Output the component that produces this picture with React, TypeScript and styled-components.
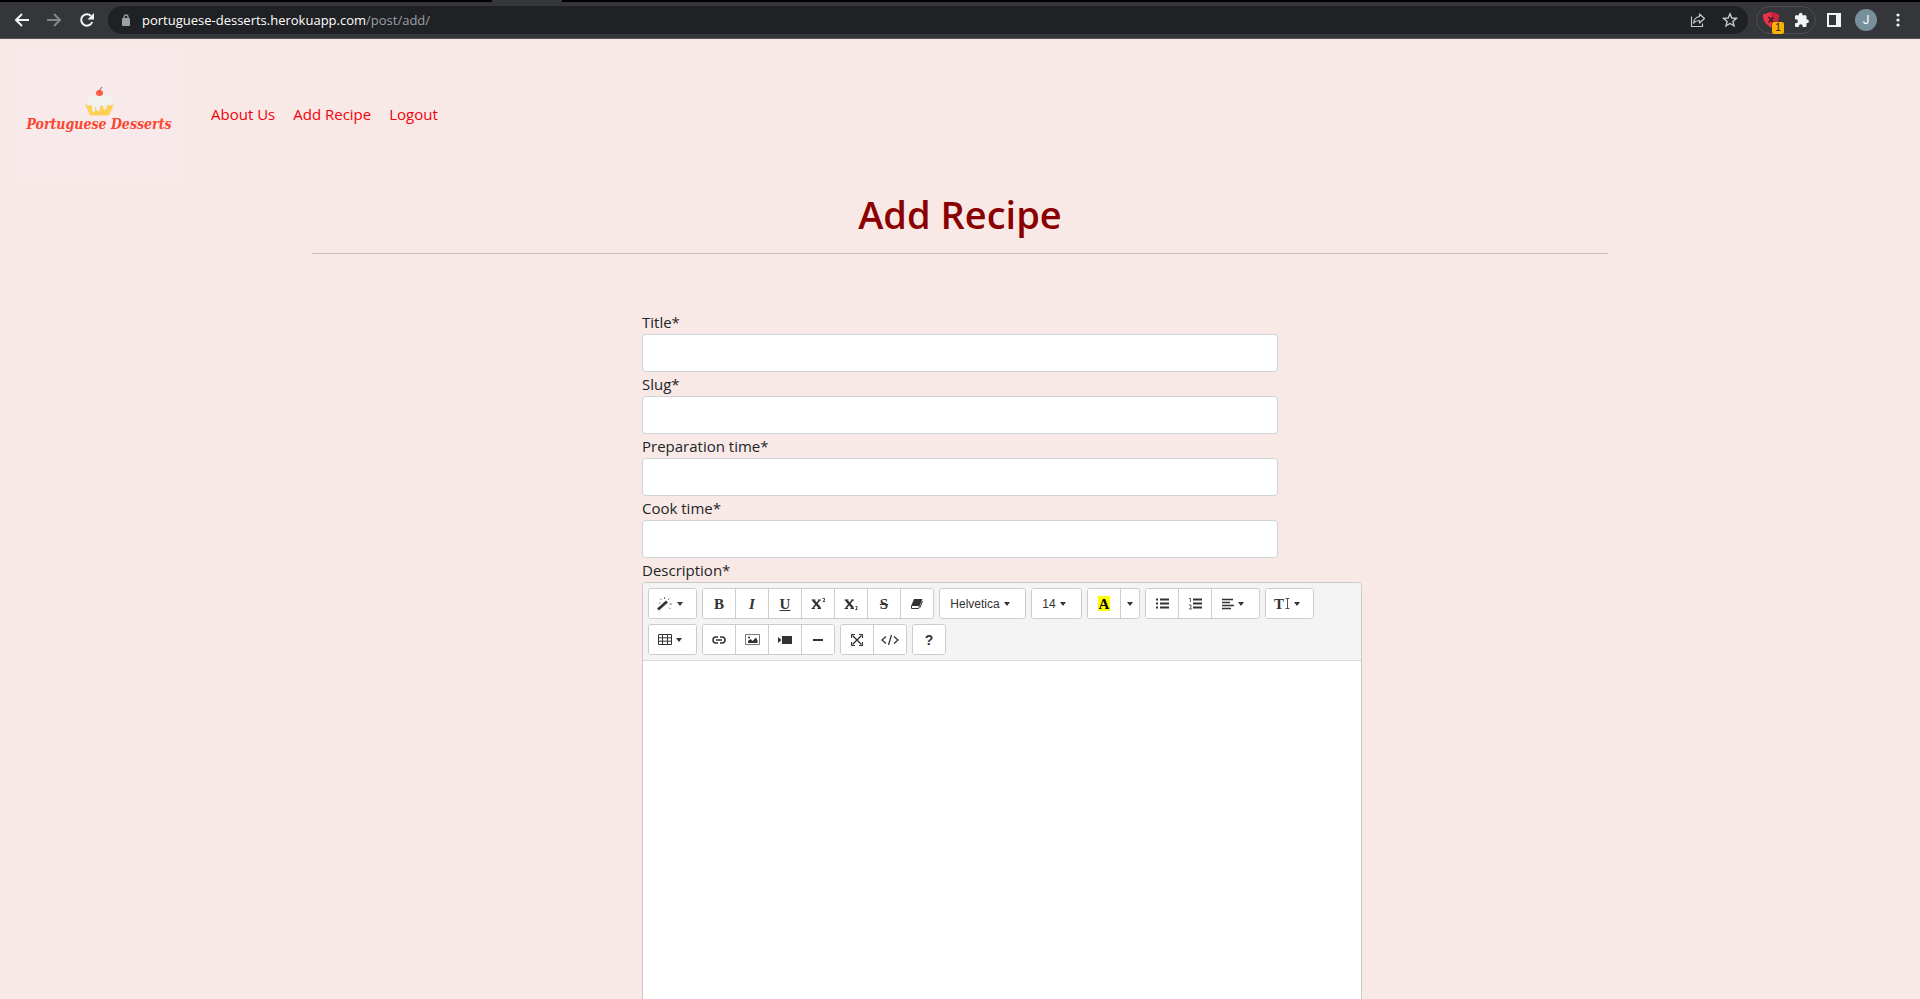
import React from 'react';
import styled, { createGlobalStyle } from 'styled-components';

const GlobalStyle = createGlobalStyle`
  *, *::before, *::after { box-sizing: border-box; }
  html, body, #root { height: 100%; }
  body {
    margin: 0;
    background: #f9e9e6;
    color: #212529;
    font-family: "Open Sans", "Noto Sans", sans-serif;
    font-size: 15px;
    line-height: 24px;
  }
  button, input { font: inherit; color: inherit; }
`;

const Screen = styled.div`
  display: flex;
  flex-direction: column;
  height: 100%;
`;

/* ---------- Browser bar ---------- */

const TabStrip = styled.div`
  display: flex;
  flex: none;
  height: 2px;
  padding-left: 492px;
  background: #000;
`;

const ActiveTab = styled.div`
  width: 70px;
  background: #35363a;
`;

const BrowserBar = styled.header`
  display: flex;
  align-items: center;
  flex: none;
  height: 37px;
  padding: 0 6px 0 11px;
  background: #35363a;
  border-bottom: 1px solid #55565a;
`;

const BarButton = styled.button<{ $w?: number; $dim?: boolean }>`
  display: flex;
  align-items: center;
  justify-content: center;
  flex: none;
  width: ${p => p.$w ?? 32}px;
  height: 28px;
  padding: 0;
  border: 0;
  background: none;
  color: ${p => (p.$dim ? '#85868a' : '#f1f3f4')};
`;

const AddressBar = styled.div`
  display: flex;
  align-items: center;
  flex: 1;
  height: 28px;
  margin: 0 8px 0 10px;
  padding: 0 2px 0 14px;
  border-radius: 14px;
  background: #202124;
  color: #9aa0a6;
  font-size: 13px;
  line-height: 20px;
`;

const Address = styled.span`
  flex: 1;
  margin-left: 12px;
`;

const Host = styled.span`
  color: #fff;
`;

const AddressAction = styled(BarButton)`
  color: #c4c7cb;
`;

const Extensions = styled.div`
  display: flex;
  align-items: center;
  justify-content: space-between;
  width: 60px;
  height: 28px;
  margin-right: 2px;
  padding: 0 2px 0 0;
  border: 1px solid #4c4d51;
  border-radius: 14px;
`;

const ShieldButton = styled(BarButton)`
  position: relative;
`;

const Badge = styled.span`
  position: absolute;
  right: 1px;
  bottom: 0;
  width: 12px;
  height: 12px;
  border-radius: 2px;
  background: #fbb000;
  color: #202124;
  font: 10px/12px "Liberation Sans", sans-serif;
  text-align: center;
`;

const Avatar = styled.span`
  width: 22px;
  height: 22px;
  border-radius: 50%;
  background: #78909c;
  color: #fff;
  font: 12px/22px Roboto, sans-serif;
  text-align: center;
`;

/* ---------- Page ---------- */

const Page = styled.div`
  flex: 1;
  min-height: 0;
  overflow-y: auto;
  scrollbar-width: none;
`;

const Navbar = styled.nav`
  display: flex;
  align-items: center;
  padding: 10px 17px;
`;

const Brand = styled.a`
  display: block;
  width: 165px;
  height: 130px;
  margin-right: 29px;
  background: #f8e9ea;
`;

const NavLink = styled.a`
  margin-right: 18px;
  color: #f0000c;
  text-decoration: none;
`;

const Container = styled.main`
  max-width: 1320px;
  margin: 0 auto;
  padding: 0 12px;
`;

const Heading = styled.h1`
  margin: 0;
  padding-bottom: 14px;
  border-bottom: 1px solid #c7b9bc;
  color: #8b0000;
  font-size: 38px;
  font-weight: 600;
  line-height: 50px;
  text-align: center;
`;

const Form = styled.form`
  width: 50%;
  margin: 56px auto 0;
  padding: 0 6px;
`;

const Label = styled.label`
  display: block;
`;

const TextInput = styled.input`
  display: block;
  width: 100%;
  height: 38px;
  padding: 6px 12px;
  border: 1px solid #ced4da;
  border-radius: 4px;
  background: #fff;
`;

/* ---------- Editor ---------- */

const Editor = styled.div`
  width: 720px;
  border: 1px solid #cacaca;
  border-radius: 4px;
  background: #fff;
  overflow: hidden;
`;

const Toolbar = styled.div`
  display: flex;
  flex-wrap: wrap;
  gap: 5px;
  padding: 5px;
  border-bottom: 1px solid #d8d8d8;
  background: #f4f4f4;
`;

const Group = styled.div`
  display: flex;
  overflow: hidden;
  border: 1px solid #ccc;
  border-radius: 3px;
  background: #fff;
`;

const Tool = styled.button<{ $w?: number; $menu?: boolean }>`
  display: flex;
  align-items: center;
  justify-content: center;
  gap: 4px;
  box-sizing: content-box;
  width: ${p => (p.$w ?? 32) - (p.$menu ? 5 : 0)}px;
  height: 29px;
  padding: 0 ${p => (p.$menu ? 5 : 0)}px 0 0;
  border: 0;
  background: #fff;
  color: #333;
  font: 12px/20px "Liberation Sans", sans-serif;

  &:not(:first-child) {
    border-left: 1px solid #ccc;
  }
`;

const Glyph = styled.span<{ $italic?: boolean; $line?: string }>`
  font: ${p => (p.$italic ? 'italic ' : '')}bold 15px/16px "Liberation Serif", serif;
  text-decoration: ${p => p.$line ?? 'none'};
`;

const GlyphPair = styled.span`
  display: flex;
  align-items: center;
  gap: 1px;
`;

const Marker = styled.span`
  width: 12px;
  height: 15px;
  background: #ff0;
  color: #000;
  font: bold 15px/16px "Liberation Serif", serif;
  text-align: center;
`;

const Help = styled.span`
  font: bold 14px/16px "Liberation Sans", sans-serif;
`;

const Caret = styled.span`
  border: 3px solid transparent;
  border-top: 4px solid #333;
  border-bottom: 0;
`;

const EditArea = styled.div`
  height: 400px;
  outline: 0;
`;

/* ---------- Icons ---------- */

const Icon = ({ children, w = 16, h = 16 }: { children: React.ReactNode; w?: number; h?: number }) => (
  <svg width={w} height={h} viewBox={`0 0 ${w} ${h}`} fill="none" stroke="currentColor" aria-hidden="true">
    {children}
  </svg>
);

const BackIcon = () => <Icon><path d="M15 8H2M8 2L2 8l6 6" strokeWidth="2" /></Icon>;
const ForwardIcon = () => <Icon><path d="M1 8h13M8 2l6 6-6 6" strokeWidth="2" /></Icon>;
const ReloadIcon = () => (
  <Icon>
    <path d="M13.2 10A5.7 5.7 0 1 1 12 4" strokeWidth="2" />
    <path d="M15 1v6.5H8.5z" fill="currentColor" stroke="none" />
  </Icon>
);
const LockIcon = () => (
  <Icon w={8} h={12}>
    <rect y="4" width="8" height="8" rx="1" fill="currentColor" stroke="none" />
    <path d="M2 5V3a2 2 0 0 1 4 0v2" strokeWidth="1.3" />
  </Icon>
);
const ShareIcon = () => (
  <Icon>
    <path d="M1.500 4.500v10h11v-3" strokeWidth="1.200" />
    <path d="M9.500 2l5 4.500-5 4.500V8.500c-3 0-4.500.8-6 2.500.5-3.500 2.500-6 6-6.500z" strokeWidth="1.200" strokeLinejoin="round" />
  </Icon>
);
const StarIcon = () => (
  <Icon><path d="M8 1.800l1.800 4.200 4.600.4-3.500 3 1.100 4.500L8 11.500l-4 2.400 1.100-4.500-3.500-3 4.600-.4z" strokeWidth="1.400" /></Icon>
);
const ShieldIcon = () => (
  <Icon w={18} h={18}>
    <path d="M9 1l8 2.500c.3 6-2.500 10-8 13-5.500-3-8.300-7-8-13z" fill="#ea3347" stroke="none" />
    <path d="M9 1l8 2.500c.3 6-2.500 10-8 13z" fill="#c9253a" stroke="none" />
    <path d="M6.500 6l5 5.500M11.500 6l-5 5.500" stroke="#33242a" strokeWidth="1.600" />
  </Icon>
);
const PuzzleIcon = () => (
  <Icon>
    <path d="M13.500 7.500h-1V4.600c0-.8-.6-1.300-1.300-1.300H8.500V2.500a1.800 1.800 0 0 0-3.600 0v.8H2.200C1.500 3.300 1 3.900 1 4.600v2.600h.9a2 2 0 0 1 0 4H1v2.500c0 .8.500 1.300 1.200 1.300h2.600v-.9a1.900 1.900 0 0 1 3.900 0v.9h2.500c.7 0 1.300-.5 1.300-1.300V11h1a1.800 1.800 0 0 0 0-3.500z" fill="currentColor" stroke="none" />
  </Icon>
);
const PanelIcon = () => (
  <Icon w={14} h={14}>
    <path d="M0 0h14v14H0zM2 2v10h7V2z" fill="currentColor" fillRule="evenodd" stroke="none" />
  </Icon>
);
const MenuIcon = () => (
  <Icon w={4} h={14}>
    <g fill="currentColor" stroke="none"><circle cx="2" cy="2" r="1.600" /><circle cx="2" cy="7" r="1.600" /><circle cx="2" cy="12" r="1.600" /></g>
  </Icon>
);

const MagicIcon = () => (
  <Icon>
    <path d="M1 13.500L10 5.500" strokeWidth="2.800" />
    <path d="M7.500 1v2M3 2.500L4.500 4M12.500 2.500L11 4M12.500 8H15M12 11.500l1.500 1.500M2 7h1.500" stroke="#777" />
  </Icon>
);
const TableIcon = () => (
  <Icon w={14} h={12}>
    <path d="M.5.5h13v10H.5zM.5 3.800h13M.5 7.200h13M4.500.5v10M9.500.5v10" />
  </Icon>
);
const EraserIcon = () => (
  <Icon w={12} h={12}>
    <path d="M3 1h8.500L9 7H.5z" fill="currentColor" stroke="none" />
    <path d="M.5 7.500h8l-.8 3H.5zM9 9.500L11.500 3" />
  </Icon>
);
const Bullets = () => <path d="M4 2.500h9M4 6.500h9M4 10.500h9" strokeWidth="2" />;
const ListIcon = () => (
  <Icon w={13} h={13}><Bullets /><path d="M0 2.500h2M0 6.500h2M0 10.500h2" strokeWidth="2" /></Icon>
);
const OrderedIcon = () => (
  <Icon w={13} h={13}>
    <Bullets />
    <path d="M0 1.500h1.500V5M0 8h2v2l-1.500 2H3" strokeWidth=".8" />
  </Icon>
);
const AlignIcon = () => (
  <Icon w={12} h={12}><path d="M0 1.500h11M0 4.500h8M0 7.500h12M0 10.500h9" strokeWidth="1.400" /></Icon>
);
const HeightIcon = () => (
  <Icon w={5} h={12}><path d="M.5.5h4M2.500.5v10M.5 10.500h4" stroke="#555" /></Icon>
);
const LinkIcon = () => (
  <Icon w={14} h={10}>
    <path d="M6 2H4a3 3 0 0 0 0 6h2M8 2h2a3 3 0 0 1 0 6H8M4 5h6" strokeWidth="1.500" />
  </Icon>
);
const PictureIcon = () => (
  <Icon w={15} h={12}>
    <path d="M.5.5h14v10H.5z" stroke="#777" />
    <path d="M3 9V7l2.500-2L7.500 7 11 3.500l1.500 3V9z" fill="currentColor" stroke="none" />
    <circle cx="4" cy="3.500" r="1" fill="currentColor" stroke="none" />
  </Icon>
);
const VideoIcon = () => (
  <Icon w={14} h={10}>
    <path d="M4 1h10v8H4zM0 2l3.500 3L0 8z" fill="currentColor" stroke="none" />
  </Icon>
);
const RuleIcon = () => <Icon w={10} h={4}><path d="M0 2h10" strokeWidth="2" /></Icon>;
const ExpandIcon = () => (
  <Icon w={12} h={12}>
    <path d="M1.500 1.500l9 9M10.500 1.500l-9 9" strokeWidth="1.400" />
    <path d="M.5 4V.5H4M8 .5h3.500V4M11.500 8v3.500H8M4 11.500H.5V8" />
  </Icon>
);
const CodeIcon = () => (
  <Icon w={18} h={10}><path d="M5 1.500L1 5l4 3.500M13 1.500L17 5l-4 3.500M10.500 0l-3 10" strokeWidth="1.300" /></Icon>
);
const ScriptIcon = ({ raised }: { raised?: boolean }) => (
  <Icon w={15} h={14}>
    <path d="M2 3l7 8" strokeWidth="2.400" />
    <path d="M8.500 3L2 11" strokeWidth="1.500" />
    <path d="M.5 3h4M7 3h3M.5 11.500H4M6.500 11.500H10" />
    <path d={raised ? 'M11.500 1.500h2v1.500l-1.500 1.500h2' : 'M11.500 9.500h1.500v1.500l-1.500 1.500h2'} strokeWidth=".9" />
  </Icon>
);

const Logo = () => (
  <svg width="165" height="130" viewBox="0 0 165 130" role="img" aria-label="Portuguese Desserts">
    <path d="M68 55h29l-5 11.500H73z" fill="#ffcf56" />
    <path d="M69 55c-1-6 5-10 14-10s15 4 14 10c-2 2-5 1-7 1 0 6-4 6-4 1-2-1-3 0-3 2 0 5-4 4-4-1h-1v3c0 3-3 3-3-1v-4c-2 1-5 1-6-1z" fill="#f1f1f0" />
    <ellipse cx="82.500" cy="44" rx="3.500" ry="3" fill="#fc5b45" />
    <path d="M82 42l3-4" stroke="#665" fill="none" />
    <text x="82" y="80" textAnchor="middle" fill="#fa4630" fontFamily="DejaVu Serif Condensed, DejaVu Serif, serif" fontSize="14" fontWeight="700" fontStyle="italic">
      Portuguese Desserts
    </text>
  </svg>
);

const fields = [
  { id: 'title', label: 'Title*' },
  { id: 'slug', label: 'Slug*' },
  { id: 'prep', label: 'Preparation time*' },
  { id: 'cook', label: 'Cook time*' },
];

export default function App() {
  return (
    <Screen>
      <GlobalStyle />
      <TabStrip><ActiveTab /></TabStrip>
      <BrowserBar>
        <BarButton aria-label="Back" $w={22}><BackIcon /></BarButton>
        <BarButton aria-label="Forward" $w={42} $dim><ForwardIcon /></BarButton>
        <BarButton aria-label="Reload" $w={23}><ReloadIcon /></BarButton>
        <AddressBar>
          <LockIcon />
          <Address><Host>portuguese-desserts.herokuapp.com</Host>/post/add/</Address>
          <AddressAction aria-label="Share"><ShareIcon /></AddressAction>
          <AddressAction aria-label="Bookmark"><StarIcon /></AddressAction>
        </AddressBar>
        <Extensions>
          <ShieldButton aria-label="Blocker" $w={28}><ShieldIcon /><Badge>1</Badge></ShieldButton>
          <BarButton aria-label="Extensions" $w={22}><PuzzleIcon /></BarButton>
        </Extensions>
        <BarButton aria-label="Side panel"><PanelIcon /></BarButton>
        <BarButton aria-label="Profile"><Avatar>J</Avatar></BarButton>
        <BarButton aria-label="Menu"><MenuIcon /></BarButton>
      </BrowserBar>
      <Page>
        <Navbar>
          <Brand href="#"><Logo /></Brand>
          <NavLink href="#about">About Us</NavLink>
          <NavLink href="#add">Add Recipe</NavLink>
          <NavLink href="#logout">Logout</NavLink>
        </Navbar>
        <Container>
          <Heading>Add Recipe</Heading>
          <Form>
            {fields.map(f => (
              <div key={f.id}>
                <Label htmlFor={f.id}>{f.label}</Label>
                <TextInput id={f.id} type="text" />
              </div>
            ))}
            <Label id="description-label">Description*</Label>
            <Editor>
              <Toolbar>
                <Group><Tool type="button" aria-label="Style" $w={47} $menu><MagicIcon /><Caret /></Tool></Group>
                <Group>
                  <Tool type="button"><Glyph>B</Glyph></Tool>
                  <Tool type="button"><Glyph $italic>I</Glyph></Tool>
                  <Tool type="button"><Glyph $line="underline">U</Glyph></Tool>
                  <Tool type="button" aria-label="Superscript"><ScriptIcon raised /></Tool>
                  <Tool type="button" aria-label="Subscript"><ScriptIcon /></Tool>
                  <Tool type="button"><Glyph $line="line-through">S</Glyph></Tool>
                  <Tool type="button" aria-label="Clear format"><EraserIcon /></Tool>
                </Group>
                <Group><Tool type="button" $w={85} $menu>Helvetica <Caret /></Tool></Group>
                <Group><Tool type="button" $w={49} $menu>14 <Caret /></Tool></Group>
                <Group>
                  <Tool type="button"><Marker>A</Marker></Tool>
                  <Tool type="button" aria-label="More colors" $w={18}><Caret /></Tool>
                </Group>
                <Group>
                  <Tool type="button" aria-label="Bullet list"><ListIcon /></Tool>
                  <Tool type="button" aria-label="Numbered list"><OrderedIcon /></Tool>
                  <Tool type="button" aria-label="Paragraph" $w={47} $menu><AlignIcon /><Caret /></Tool>
                </Group>
                <Group>
                  <Tool type="button" aria-label="Line height" $w={47} $menu>
                    <GlyphPair><Glyph>T</Glyph><HeightIcon /></GlyphPair><Caret />
                  </Tool>
                </Group>
                <Group><Tool type="button" aria-label="Table" $w={47} $menu><TableIcon /><Caret /></Tool></Group>
                <Group>
                  <Tool type="button" aria-label="Link"><LinkIcon /></Tool>
                  <Tool type="button" aria-label="Picture"><PictureIcon /></Tool>
                  <Tool type="button" aria-label="Video"><VideoIcon /></Tool>
                  <Tool type="button" aria-label="Rule"><RuleIcon /></Tool>
                </Group>
                <Group>
                  <Tool type="button" aria-label="Full screen"><ExpandIcon /></Tool>
                  <Tool type="button" aria-label="Code view"><CodeIcon /></Tool>
                </Group>
                <Group><Tool type="button"><Help>?</Help></Tool></Group>
              </Toolbar>
              <EditArea contentEditable role="textbox" aria-multiline="true" aria-labelledby="description-label" />
            </Editor>
          </Form>
        </Container>
      </Page>
    </Screen>
  );
}
